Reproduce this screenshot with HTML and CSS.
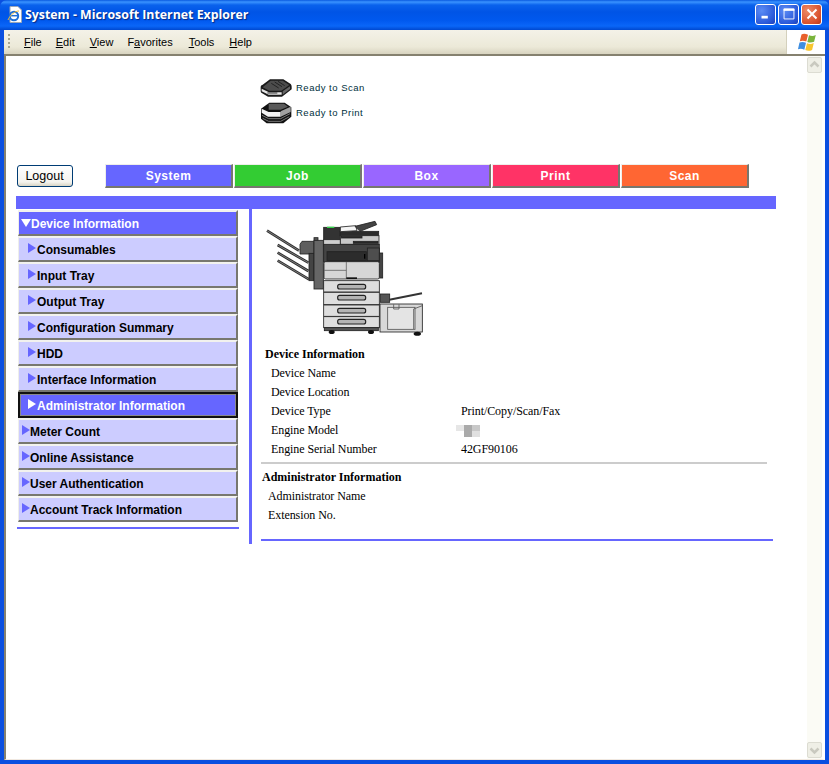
FILE: index.html
```html
<!DOCTYPE html>
<html lang="en">
<head>
<meta charset="utf-8">
<title>System - Microsoft Internet Explorer</title>
<link rel="stylesheet" href="styles.css">
</head>
<body>
<div class="window">
  <header class="titlebar">
    <svg class="app-icon" viewBox="0 0 16 17" width="16" height="17">
      <path d="M3 0.5h8l3.500 3.500v12.500h-11.500z" fill="#fff" stroke="#9aa7b8"/>
      <circle cx="7" cy="10" r="4.200" fill="none" stroke="#1c6fd8" stroke-width="2"/>
      <path d="M3.500 9.700h7" stroke="#1c6fd8" stroke-width="1.500"/>
      <path d="M1 14c2-5 7-9 11-9" fill="none" stroke="#e8b93a" stroke-width="1"/>
    </svg>
    <span class="title-text">System - Microsoft Internet Explorer</span>
    <div class="win-buttons">
      <div class="win-btn"><svg viewBox="0 0 20 20" width="18" height="18"><rect x="5" y="12" width="7" height="3" fill="#fff"/></svg></div>
      <div class="win-btn"><svg viewBox="0 0 20 20" width="18" height="18"><path d="M4.500 4.500h11v11h-11z" fill="none" stroke="#fff"/><rect x="4" y="4" width="12" height="2.500" fill="#fff"/></svg></div>
      <div class="win-btn close"><svg viewBox="0 0 20 20" width="18" height="18"><path d="M5 5l10 10M15 5l-10 10" stroke="#fff" stroke-width="2.200"/></svg></div>
    </div>
  </header>
  <div class="menubar">
    <div class="menu-main">
      <span class="grip"></span>
      <nav class="menu-items">
        <span class="m-file"><u>F</u>ile</span>
        <span class="m-edit"><u>E</u>dit</span>
        <span class="m-view"><u>V</u>iew</span>
        <span class="m-fav">F<u>a</u>vorites</span>
        <span class="m-tools"><u>T</u>ools</span>
        <span class="m-help"><u>H</u>elp</span>
      </nav>
    </div>
    <div class="brand">
      <svg viewBox="0 0 20 19" width="20" height="19">
        <path d="M3.500 1.500c2-1 4-.8 6.500.3l-1.700 6.800c-2.300-1-4.300-1.100-6.500-.3z" fill="#e8602c"/>
        <path d="M11 2.200c2.300 1 4.500 1 6.800-.2l-1.700 6.800c-2.300 1-4.600 1.100-6.800.2z" fill="#7ab43c"/>
        <path d="M1.500 9.500c2.200-.8 4.200-.7 6.500.3l-1.700 6.900c-2.300-1-4.300-1.200-6.400-.3z" fill="#3f8ee0"/>
        <path d="M9 10.200c2.300 1 4.500.9 6.800-.2l-1.700 6.900c-2.300 1.100-4.500 1.200-6.800.2z" fill="#f7c52e"/>
      </svg>
    </div>
  </div>
  <div class="viewport-line"></div>
  <div class="client">
    <main class="page">
      <section class="status">
        <div class="status-row">
          <svg class="dev-icon" viewBox="0 0 96 60" width="32" height="20">
            <path d="M2 26Q2 22 8 20L30 4h40l22 14q3 3 3 8v8L66 56H24L4 44Q2 42 2 38z" fill="#1a1a1a"/>
            <path d="M8 28 32 8h36l20 13-24 17H28z" fill="#4c4c4c"/>
            <path d="M34 16l22 14M44 12l22 14M54 10l20 13" stroke="#222" stroke-width="3"/>
            <path d="M5 32l22 11h38v7H26L5 40z" fill="#e6e6e6"/>
            <path d="M22 45h30" stroke="#333" stroke-width="3"/>
            <path d="M68 40l22-15v8L68 50z" fill="#666"/>
          </svg>
          <span>Ready to Scan</span>
        </div>
        <div class="status-row">
          <svg class="dev-icon" viewBox="0 0 96 66" width="32" height="22">
            <path d="M3 20 28 2h46l20 14v28L70 64H20L3 50z" fill="#111"/>
            <path d="M26 5h46l12 9-22 9H26z" fill="#5a5a5a"/>
            <path d="M5 20l21 10h36v14H24L5 32z" fill="#f4f4f4"/>
            <path d="M62 28l30-14v16L62 44z" fill="#a0a0a0"/>
            <path d="M6 40l20 10h36l28-15M8 49l18 9h36l26-14" stroke="#777" stroke-width="3" fill="none"/>
          </svg>
          <span>Ready to Print</span>
        </div>
      </section>

      <section class="topnav">
        <button class="logout" type="button">Logout</button>
        <nav class="tabs">
          <a class="tab t-system">System</a>
          <a class="tab t-job">Job</a>
          <a class="tab t-box">Box</a>
          <a class="tab t-print">Print</a>
          <a class="tab t-scan">Scan</a>
        </nav>
      </section>

      <div class="bluebar"></div>

      <section class="columns">
        <aside class="sidebar">
          <ul class="side-list">
            <li class="item top open"><span class="arrow-down"></span>Device Information</li>
            <li class="item sub"><span class="arrow"></span>Consumables</li>
            <li class="item sub"><span class="arrow"></span>Input Tray</li>
            <li class="item sub"><span class="arrow"></span>Output Tray</li>
            <li class="item sub"><span class="arrow"></span>Configuration Summary</li>
            <li class="item sub"><span class="arrow"></span>HDD</li>
            <li class="item sub"><span class="arrow"></span>Interface Information</li>
            <li class="item sub current"><span class="arrow"></span>Administrator Information</li>
            <li class="item top"><span class="arrow"></span>Meter Count</li>
            <li class="item top"><span class="arrow"></span>Online Assistance</li>
            <li class="item top"><span class="arrow"></span>User Authentication</li>
            <li class="item top"><span class="arrow"></span>Account Track Information</li>
          </ul>
          <div class="side-rule"></div>
        </aside>

        <article class="detail">
          <svg class="machine" viewBox="0 0 540 390" width="180" height="130">
            <g class="m-trays" fill="none">
              <path d="M36 47l96 60M68 90l92 53M68 113l92 55M68 137l94 56" stroke="#2e2e2e" stroke-width="8"/>
              <path d="M36 47l96 60M68 90l92 53M68 113l92 55M68 137l94 56" stroke="#8c8c8c" stroke-width="2.500"/>
            </g>
            <g class="m-body" stroke="#222" stroke-width="2.500">
              <path d="M135 88l6-9h35v38h-41z" fill="#5e5e5e"/>
              <rect x="162" y="115" width="15" height="82" fill="#444"/>
              <rect x="177" y="68" width="12" height="10" fill="#555"/>
              <rect x="177" y="76" width="28" height="146" fill="#666"/>

              <rect x="206" y="37" width="52" height="37" fill="#333"/>
              <rect x="216" y="35" width="22" height="4" fill="#35d24a" stroke="none"/>
              <rect x="255" y="49" width="116" height="13" fill="#2c2c2c"/>
              <path d="M256 36l46-4 4 15-50 3z" fill="#f4f4f4"/>
              <path d="M300 34l60-15 5 10-50 20z" fill="#444"/>
              <rect x="206" y="74" width="50" height="20" fill="#cfcfcf"/>
              <rect x="256" y="62" width="116" height="26" fill="#c8c8c8"/>
              <rect x="259" y="64" width="62" height="5" fill="#2a2a2a"/>
              <rect x="295" y="79" width="74" height="6" fill="#2a2a2a"/>
              <rect x="206" y="88" width="167" height="52" fill="#444"/>
              <rect x="216" y="110" width="118" height="27" fill="#2c2c2c"/>
              <rect x="337" y="99" width="36" height="38" fill="#4e4e4e"/>
              <rect x="327" y="117" width="4" height="14" fill="#000" stroke="none"/>
              <rect x="373" y="114" width="10" height="75" fill="#444"/>

              <rect x="207" y="140" width="166" height="52" rx="5" fill="#d6d6d6"/>
              <path d="M207 166h67M274 141v50" stroke="#666" fill="none"/>
              <rect x="274" y="187" width="32" height="5" fill="#111" stroke="none"/>

              <rect x="206" y="197" width="167" height="34" fill="#dedede"/>
              <rect x="206" y="232" width="167" height="37" fill="#dedede"/>
              <rect x="206" y="270" width="167" height="34" fill="#dedede"/>
              <rect x="206" y="305" width="167" height="33" fill="#dedede"/>
              <rect x="248" y="208" width="84" height="14" rx="6" fill="#b4b4b4" stroke-width="3.500"/>
              <rect x="248" y="241" width="84" height="14" rx="6" fill="#b4b4b4" stroke-width="3.500"/>
              <rect x="248" y="280" width="84" height="14" rx="6" fill="#b4b4b4" stroke-width="3.500"/>
              <rect x="248" y="313" width="84" height="14" rx="6" fill="#b4b4b4" stroke-width="3.500"/>
              <rect x="208" y="338" width="162" height="9" fill="#555"/>

              <rect x="376" y="237" width="28" height="25" fill="#555"/>
              <path d="M403 254l98-19" stroke="#333" stroke-width="6"/>
              <rect x="375" y="267" width="127" height="84" fill="#d8d8d8"/>
              <rect x="398" y="277" width="82" height="66" fill="#e4e4e4" stroke="#555"/>
              <path d="M416 268v14h16v-14M476 282l26-10M476 282v60" fill="none" stroke="#555"/>
            </g>
            <ellipse cx="230" cy="351" rx="9" ry="6" fill="#111"/>
            <ellipse cx="348" cy="351" rx="9" ry="6" fill="#111"/>
            <ellipse cx="487" cy="356" rx="11" ry="6" fill="#111"/>
          </svg>

          <h3 class="h-device">Device Information</h3>
          <dl class="info info-device">
            <dt>Device Name</dt><dd></dd>
            <dt>Device Location</dt><dd></dd>
            <dt>Device Type</dt><dd>Print/Copy/Scan/Fax</dd>
            <dt>Engine Model</dt>
            <dd>
              <svg class="masked" viewBox="0 0 24 12" width="24" height="12">
                <rect width="8" height="6" fill="#e6e6e6"/>
                <rect x="8" width="8" height="12" fill="#aaa"/>
                <rect x="16" width="8" height="6" fill="#c8c8c8"/>
                <rect x="16" y="6" width="8" height="6" fill="#e0e0e0"/>
              </svg>
            </dd>
            <dt>Engine Serial Number</dt><dd>42GF90106</dd>
          </dl>
          <div class="gray-rule"></div>
          <h3 class="h-admin">Administrator Information</h3>
          <dl class="info info-admin">
            <dt>Administrator Name</dt><dd></dd>
            <dt>Extension No.</dt><dd></dd>
          </dl>
          <div class="blue-rule"></div>
        </article>
      </section>
    </main>
    <div class="scrollbar">
      <div class="sb-btn"><svg viewBox="0 0 15 16" width="15" height="16"><path d="M3.500 9.500l4-4 4 4" fill="none" stroke="#c9c9bf" stroke-width="2.500"/></svg></div>
      <div class="sb-btn"><svg viewBox="0 0 15 16" width="15" height="16"><path d="M3.500 6.500l4 4 4-4" fill="none" stroke="#c9c9bf" stroke-width="2.500"/></svg></div>
    </div>
  </div>
</div>
</body>
</html>
```
FILE: styles.css
```css
* { box-sizing: border-box; }
html, body { margin: 0; padding: 0; background: #fff; }
body { width: 829px; height: 764px; overflow: hidden; }
ul, dl, dd, h3 { margin: 0; padding: 0; list-style: none; }

.window {
  width: 829px; height: 764px;
  display: flex; flex-direction: column;
  background: #0a4fe0;
}

.titlebar {
  height: 30px; flex: none;
  display: flex; align-items: center;
  padding: 0 7px 2px 7px;
  border-radius: 7px 7px 0 0;
  background: linear-gradient(180deg, #0a5ae0 0, #3a93ff 2px, #0a62ec 5px, #0054e6 12px, #0058ee 20px, #0a66f8 26px, #0048d0 30px);
}
.app-icon { flex: none; }
.title-text {
  margin-left: 2px;
  font: bold 12.350px "Open Sans", "Liberation Sans", sans-serif;
  color: #fff;
  text-shadow: 1px 1px 1px #0a2a80;
  white-space: nowrap;
}
.win-buttons { margin-left: auto; display: flex; gap: 2px; }
.win-btn {
  width: 21px; height: 21px;
  border: 1px solid #fff; border-radius: 3px;
  background: radial-gradient(circle at 30% 30%, #5b8cf5, #2a58d8 70%, #1c3fb8);
  display: flex; align-items: center; justify-content: center;
}
.win-btn.close { background: radial-gradient(circle at 30% 30%, #ee8a66, #d8502c 70%, #b8381c); }

.menubar {
  height: 24px; flex: none;
  margin: 0 4px;
  display: flex;
  background: #fff;
}
.menu-main {
  flex: 1;
  display: flex; align-items: center;
  background: linear-gradient(180deg, #f4f2e8, #ece9d8 70%, #d8d4c0);
  border-right: 1px solid #d4d0bc;
}
.grip {
  width: 2px; height: 16px;
  margin-left: 4px;
  background: repeating-linear-gradient(180deg, #a8a690 0 2px, transparent 2px 4px);
}
.menu-items {
  display: flex;
  font: 11px "Liberation Sans", sans-serif;
  color: #000;
  margin-left: 14px;
}
.m-edit { margin-left: 14px; }
.m-view { margin-left: 15px; }
.m-fav { margin-left: 14px; }
.m-tools { margin-left: 16px; }
.m-help { margin-left: 15px; }
.brand {
  width: 38px; flex: none;
  display: flex; align-items: center; justify-content: flex-start;
  padding-left: 11px;
}
.viewport-line { height: 2px; flex: none; margin: 0 4px; background: #85816f; }

.client {
  flex: 1; min-height: 0;
  margin: 0 4px 4px;
  display: flex;
  background: #fff;
  border-left: 2px solid #85816f;
  border-right: 3px solid #fff;
  border-bottom: 1px solid #f0e8e0;
}
.page { flex: 1; min-width: 0; }
.scrollbar {
  width: 15px; flex: none;
  padding: 1px 0;
  display: flex; flex-direction: column; justify-content: space-between;
  background: #fbfbf5;
}
.sb-btn {
  width: 15px; height: 16px;
  background: #efefe6;
  border: 1px solid #dcdcd2; border-radius: 2px;
  display: flex; align-items: center; justify-content: center;
}
.sb-btn svg { flex: none; }

/* Status */
.status { height: 108px; padding: 19px 0 0 254px; }
.status-row {
  height: 25px;
  display: flex; align-items: center; gap: 4px;
  font: 9.500px "Liberation Sans", sans-serif;
  letter-spacing: .5px;
  color: #00303c;
}
.dev-icon { flex: none; }

/* Top nav */
.topnav { height: 24px; display: flex; align-items: center; padding-left: 11px; }
.logout {
  width: 56px; height: 22px;
  padding: 0 1px 0 0; margin: 0;
  font: 12.500px "Liberation Sans", sans-serif;
  color: #000;
  border: 1px solid #003c74; border-radius: 3px;
  background: linear-gradient(180deg, #fff, #f4f3ee 80%, #d8d4c4);
}
.tabs { margin-left: 32px; display: grid; grid-template-columns: repeat(5, 128px); gap: 1px; height: 24px; }
.tab {
  display: flex; align-items: center; justify-content: center;
  padding-top: 1px;
  font: bold 12px "Liberation Sans", sans-serif;
  letter-spacing: .5px;
  color: #fff;
  border-style: solid; border-width: 1px 2px 2px 1px;
  border-color: #eeeeea #77776f #77776f #eeeeea;
}
.t-system { background: #6666ff; }
.t-job { background: #33cc33; }
.t-box { background: #9966ff; }
.t-print { background: #ff3366; }
.t-scan { background: #ff6633; }

.bluebar { width: 760px; height: 13px; margin: 8px 0 0 10px; background: #6666ff; }

/* Columns */
.columns { display: flex; margin-left: 11px; }
.sidebar { width: 222px; padding-top: 1px; flex: none; }
.side-list { margin-left: 1px; width: 220px; display: flex; flex-direction: column; }
.item {
  height: 26px;
  padding-top: 2px;
  display: flex; align-items: center;
  font: bold 12px "Liberation Sans", sans-serif;
  color: #000;
  background: #ccccff;
  border-style: solid; border-width: 2px 2px 2px 1px;
  border-color: #f2f2ee #77776f #77776f #eeeeea;
  white-space: nowrap;
}
.item.top { padding-left: 3px; }
.item.sub { padding-left: 9px; }
.item.open { background: #6666ff; color: #fff; padding-left: 2px; }
.item.current {
  background: #6666ff; color: #fff;
  border: 2px solid #111;
  box-shadow: inset 0 0 0 1px #8a8a8a;
  padding: 1px 0 0 8px;
}
.arrow {
  width: 0; height: 0; flex: none;
  margin: -4px 0 0 0;
  border-left: 8px solid #6666ff;
  border-top: 5px solid transparent;
  border-bottom: 5px solid transparent;
}
.sub .arrow { margin-right: 1px; }
.current .arrow { border-left-color: #fff; }
.arrow-down {
  width: 0; height: 0; flex: none;
  margin: -2px 0 0 0;
  border-top: 8px solid #fff;
  border-left: 5px solid transparent;
  border-right: 5px solid transparent;
}
.side-rule { width: 222px; height: 2px; margin-top: 5px; background: #6666ff; }

.detail {
  width: 525px; height: 335px;
  margin-left: 10px;
  border-left: 3px solid #6666ff;
  display: flex; flex-direction: column; align-items: flex-start;
  font: 12px "Liberation Serif", serif;
  letter-spacing: -.08px;
  color: #000;
}
.machine { margin: 6px 0 0 3px; flex: none; }
.h-device, .h-admin { font: bold 12px "Liberation Serif", serif; line-height: 19px; letter-spacing: 0; }
.h-device { margin: 0 0 0 13px; height: 19px; }
.h-admin { margin: 4px 0 0 10px; height: 19px; }
.info { display: grid; grid-template-columns: 190px 1fr; grid-auto-rows: 19px; line-height: 19px; }
.info-device { margin-left: 19px; }
.info-admin { margin-left: 16px; }
.masked { display: block; margin: 4px 0 0 -5px; }
.gray-rule { width: 506px; height: 2px; margin: 3px 0 0 9px; background: #cccccc; flex: none; }
.blue-rule { width: 512px; height: 2px; margin: 14px 0 0 9px; background: #6666ff; flex: none; }
```
